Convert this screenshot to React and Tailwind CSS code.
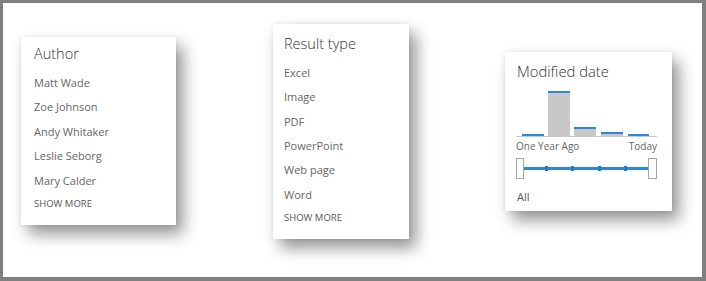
export default function App() {
  const font = { fontFamily: '"Open Sans", "Noto Sans", sans-serif' };
  const shadow = "shadow-[7px_9px_15px_rgba(0,0,0,0.42),0_0_5px_rgba(0,0,0,0.08)]";
  const authors = ["Matt Wade", "Zoe Johnson", "Andy Whitaker", "Leslie Seborg", "Mary Calder"];
  const types = ["Excel", "Image", "PDF", "PowerPoint", "Web page", "Word"];
  const bars = [
    { x: 6, w: 22, top: 48 },
    { x: 32, w: 22, top: 5 },
    { x: 58, w: 22, top: 41 },
    { x: 85, w: 22, top: 46 },
    { x: 112, w: 21, top: 48 },
  ];
  return (
    <div
      className="w-[706px] h-[281px] bg-white border-solid border-[#808080] border-l-[3px] border-t-[3px] border-r-[4px] border-b-[4px] flex items-start"
      style={font}
    >
      {/* Author */}
      <div className={`ml-[18px] mt-[34px] w-[155px] h-[188px] bg-white ${shadow} pl-[13px] pt-[7px]`}>
        <div className="h-[20px] leading-[20px] text-[14.5px] font-light text-[#333333]">Author</div>
        <div className="mt-[6.75px]">
          {authors.map((a) => (
            <div key={a} className="h-[24.5px] leading-[24.5px] text-[11px] text-[#666666]">
              {a}
            </div>
          ))}
        </div>
        <div className="h-[22px] leading-[22px] text-[9.5px] text-[#555555]">SHOW MORE</div>
      </div>

      {/* Result type */}
      <div className={`ml-[97px] mt-[21px] w-[136px] h-[215px] bg-white ${shadow} pl-[11px] pt-[9.7px]`}>
        <div className="h-[20px] leading-[20px] text-[14.5px] font-light text-[#333333]">Result type</div>
        <div className="mt-[7.1px]">
          {types.map((t) => (
            <div key={t} className="h-[24.4px] leading-[24.4px] text-[11px] text-[#666666]">
              {t}
            </div>
          ))}
        </div>
        <div className="h-[22px] leading-[22px] text-[9.5px] text-[#555555]">SHOW MORE</div>
      </div>

      {/* Modified date */}
      <div className={`ml-[96px] mt-[49px] w-[167px] h-[159px] bg-white ${shadow} pl-[11px] pr-[15px] pt-[9px]`}>
        <div className="h-[20px] leading-[20px] text-[14.8px] font-light text-[#333333] pl-px">Modified date</div>
        <svg className="mt-[5px] block" width="141" height="51" viewBox="0 0 141 51">
          {bars.map((b, i) => (
            <g key={i}>
              <rect x={b.x} y={b.top} width={b.w} height={50 - b.top} fill="#c8c8c8" />
              <rect x={b.x} y={b.top} width={b.w} height="2" fill="#2b88d8" />
            </g>
          ))}
          <rect x="0" y="50" width="141" height="1" fill="#c8c8c8" />
        </svg>
        <div className="h-[18px] leading-[18px] flex justify-between text-[10px] text-[#666666]">
          <span>One Year Ago</span>
          <span>Today</span>
        </div>
        <div className="mt-[3px] h-[21px] flex items-stretch">
          <div className="w-[8px] border border-[#a6a6a6] bg-white" />
          <div className="flex-1 flex items-center">
            <div className="relative w-full h-[3px] bg-[#2b88d8] flex items-center justify-between px-[21px]">
              {[0, 1, 2, 3].map((i) => (
                <div key={i} className="w-[3px] h-[5px] bg-[#1f7ccc]" />
              ))}
            </div>
          </div>
          <div className="w-[9px] border border-[#a6a6a6] bg-white" />
        </div>
        <div className="mt-[9px] h-[18px] leading-[18px] text-[11px] text-[#555555] pl-px">All</div>
      </div>
    </div>
  );
}
